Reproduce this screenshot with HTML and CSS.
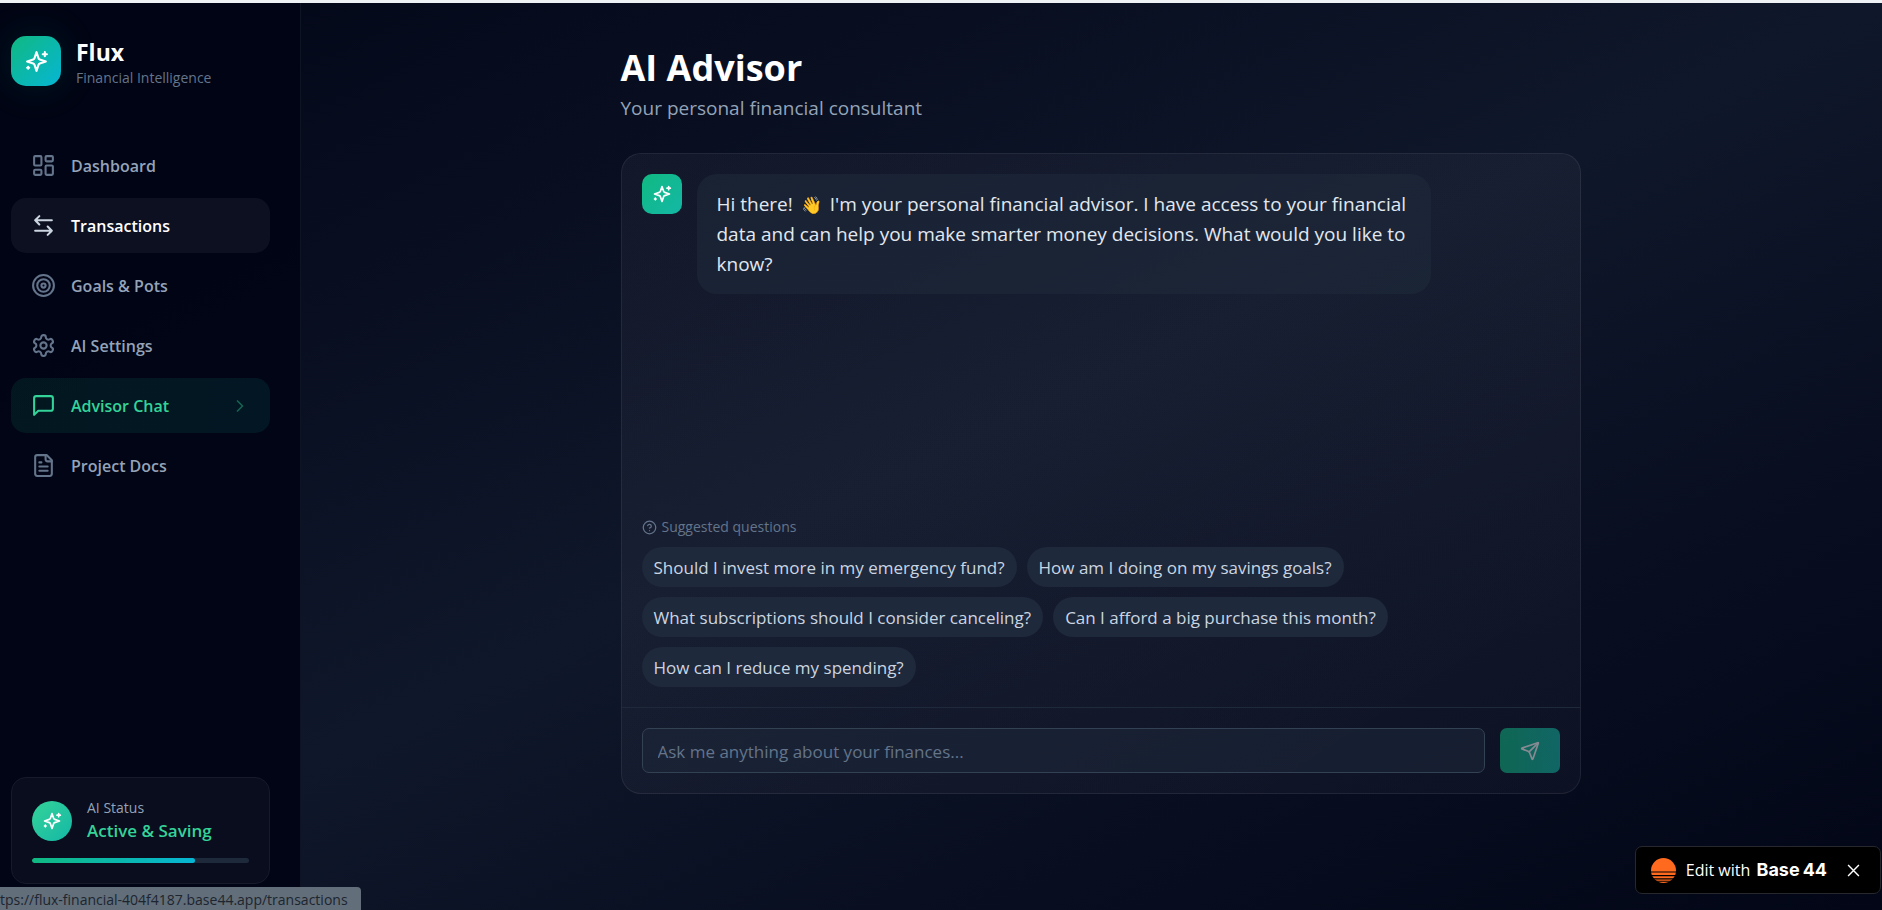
FILE: index.html
```html
<!DOCTYPE html>
<html lang="en">
<head>
<meta charset="utf-8">
<meta name="viewport" content="width=device-width, initial-scale=1">
<title>Flux – AI Advisor</title>
<link rel="stylesheet" href="styles.css">
</head>
<body>
<svg class="sprite" aria-hidden="true">
  <symbol id="sparkles" viewBox="0 0 24 24"><path d="m12 3-1.912 5.813a2 2 0 0 1-1.275 1.275L3 12l5.813 1.912a2 2 0 0 1 1.275 1.275L12 21l1.912-5.813a2 2 0 0 1 1.275-1.275L21 12l-5.813-1.912a2 2 0 0 1-1.275-1.275L12 3Z"/><path d="M20 3v4M22 5h-4M4 17v2M5 18H3"/></symbol>
</svg>
<div class="app">
  <aside class="sidebar">
    <div class="brand">
      <div class="brand-mark"><svg class="icon"><use href="#sparkles"/></svg></div>
      <div class="brand-text">
        <div class="brand-name">Flux</div>
        <div class="brand-tag">Financial Intelligence</div>
      </div>
    </div>
    <nav class="nav">
      <a class="nav-item" href="#dashboard"><svg class="icon" viewBox="0 0 24 24"><rect x="3" y="3" width="7" height="9" rx="1"/><rect x="14" y="3" width="7" height="5" rx="1"/><rect x="14" y="12" width="7" height="9" rx="1"/><rect x="3" y="16" width="7" height="5" rx="1"/></svg><span>Dashboard</span></a>
      <a class="nav-item nav-hover" href="#transactions"><svg class="icon" viewBox="0 0 24 24"><path d="M8 3 4 7l4 4M4 7h16M16 21l4-4-4-4M20 17H4"/></svg><span>Transactions</span></a>
      <a class="nav-item" href="#goals"><svg class="icon" viewBox="0 0 24 24"><circle cx="12" cy="12" r="10"/><circle cx="12" cy="12" r="6"/><circle cx="12" cy="12" r="2"/></svg><span>Goals &amp; Pots</span></a>
      <a class="nav-item" href="#settings"><svg class="icon" viewBox="0 0 24 24"><path d="M12.22 2h-.44a2 2 0 0 0-2 2v.18a2 2 0 0 1-1 1.73l-.43.25a2 2 0 0 1-2 0l-.15-.08a2 2 0 0 0-2.73.73l-.22.38a2 2 0 0 0 .73 2.73l.15.1a2 2 0 0 1 1 1.72v.51a2 2 0 0 1-1 1.74l-.15.09a2 2 0 0 0-.73 2.73l.22.38a2 2 0 0 0 2.73.73l.15-.08a2 2 0 0 1 2 0l.43.25a2 2 0 0 1 1 1.73V20a2 2 0 0 0 2 2h.44a2 2 0 0 0 2-2v-.18a2 2 0 0 1 1-1.73l.43-.25a2 2 0 0 1 2 0l.15.08a2 2 0 0 0 2.73-.73l.22-.39a2 2 0 0 0-.73-2.73l-.15-.08a2 2 0 0 1-1-1.74v-.5a2 2 0 0 1 1-1.74l.15-.09a2 2 0 0 0 .73-2.73l-.22-.38a2 2 0 0 0-2.73-.73l-.15.08a2 2 0 0 1-2 0l-.43-.25a2 2 0 0 1-1-1.73V4a2 2 0 0 0-2-2z"/><circle cx="12" cy="12" r="3"/></svg><span>AI Settings</span></a>
      <a class="nav-item nav-active" href="#advisor" aria-current="page"><svg class="icon" viewBox="0 0 24 24"><path d="M21 15a2 2 0 0 1-2 2H7l-4 4V5a2 2 0 0 1 2-2h14a2 2 0 0 1 2 2z"/></svg><span>Advisor Chat</span><svg class="icon chevron" viewBox="0 0 24 24"><path d="m9 18 6-6-6-6"/></svg></a>
      <a class="nav-item" href="#docs"><svg class="icon" viewBox="0 0 24 24"><path d="M15 2H6a2 2 0 0 0-2 2v16a2 2 0 0 0 2 2h12a2 2 0 0 0 2-2V7Z"/><path d="M14 2v4a2 2 0 0 0 2 2h4M10 9H8M16 13H8M16 17H8"/></svg><span>Project Docs</span></a>
    </nav>
    <section class="status">
      <div class="status-row">
        <div class="status-mark"><svg class="icon"><use href="#sparkles"/></svg></div>
        <div>
          <div class="status-label">AI Status</div>
          <div class="status-value">Active &amp; Saving</div>
        </div>
      </div>
      <div class="meter"><div class="meter-fill"></div></div>
    </section>
  </aside>

  <main class="main">
    <div class="column">
      <header class="page-head">
        <h1 class="page-title">AI Advisor</h1>
        <p class="page-sub">Your personal financial consultant</p>
      </header>
      <section class="chat">
        <div class="messages">
          <div class="message">
            <div class="avatar"><svg class="icon"><use href="#sparkles"/></svg></div>
            <p class="bubble">Hi there! <span class="wave">👋</span> I'm your personal financial advisor. I have access to your financial data and can help you make smarter money decisions. What would you like to know?</p>
          </div>
        </div>
        <div class="suggest">
          <p class="suggest-label"><svg class="icon" viewBox="0 0 24 24"><circle cx="12" cy="12" r="10"/><path d="M9.09 9a3 3 0 0 1 5.83 1c0 2-3 3-3 3M12 17h.01"/></svg>Suggested questions</p>
          <div class="chips">
            <button class="chip" type="button">Should I invest more in my emergency fund?</button>
            <button class="chip" type="button">How am I doing on my savings goals?</button>
            <button class="chip" type="button">What subscriptions should I consider canceling?</button>
            <button class="chip" type="button">Can I afford a big purchase this month?</button>
            <button class="chip" type="button">How can I reduce my spending?</button>
          </div>
        </div>
        <form class="composer">
          <input class="composer-input" type="text" aria-label="Message" placeholder="Ask me anything about your finances...">
          <button class="send" type="button" aria-label="Send" disabled><svg class="icon" viewBox="0 0 24 24"><path d="M14.536 21.686a.5.5 0 0 0 .937-.024l6.5-19a.496.496 0 0 0-.635-.635l-19 6.5a.5.5 0 0 0-.024.937l7.93 3.18a2 2 0 0 1 1.112 1.11z"/><path d="m21.854 2.147-10.94 10.939"/></svg></button>
        </form>
      </section>
    </div>
  </main>
</div>

<div class="link-preview">tps://flux-financial-404f4187.base44.app/transactions</div>

<div class="edit-badge">
  <svg class="sun" viewBox="0 0 25 25"><circle cx="12.5" cy="12.5" r="12.5"/><path class="sun-lines" d="M0 13.4h25v1.1H0zM0 17h25v1.2H0zM0 20.2h25v1.2H0zM0 22.8h25v.9H0z"/></svg>
  <a class="edit-link" href="#edit">Edit with <b class="edit-brand">Base<span class="edit-num">44</span></b></a>
  <button class="edit-close" type="button" aria-label="Close"><svg viewBox="0 0 12 12"><path d="M1 1l10 10M11 1 1 11"/></svg></button>
</div>
</body>
</html>
```
FILE: styles.css
```css
* { box-sizing: border-box; margin: 0; padding: 0; }

body {
  min-height: 100vh;
  border-top: 3px solid #eef2f5;
  background: linear-gradient(to bottom right, #020617, #0f172a 50%, #020617);
  color: #fff;
  font-family: "Open Sans", "Noto Sans", sans-serif;
  font-size: 16px;
}

button, input { font: inherit; color: inherit; }
a { color: inherit; text-decoration: none; }

.sprite { position: absolute; width: 0; height: 0; }

.icon {
  flex: none;
  fill: none;
  stroke: currentColor;
  stroke-width: 2;
  stroke-linecap: round;
  stroke-linejoin: round;
}

.app { display: flex; min-height: calc(100vh - 3px); }

/* Sidebar */
.sidebar {
  flex: 0 0 301px;
  display: flex;
  flex-direction: column;
  padding: 33px 30px 26px 11px;
  border-right: 1px solid #0f1424;
  background: rgba(1, 4, 20, 0.93);
}

.brand { display: flex; align-items: flex-start; gap: 15px; height: 50px; }

.brand-mark {
  display: grid;
  place-items: center;
  width: 50px;
  height: 50px;
  border-radius: 15px;
  background: linear-gradient(to bottom right, #10b981, #06b6d4);
  box-shadow: 0 0 40px rgba(16, 185, 129, 0.14);
}
.brand-mark .icon { width: 25px; height: 25px; }
.brand-text { padding-top: 2px; }
.brand-name { font-size: 23px; font-weight: 700; line-height: 28px; }
.brand-tag { color: #64748b; font-size: 14px; line-height: 24px; }

.nav { display: flex; flex-direction: column; gap: 5px; margin-top: 52px; }

.nav-item {
  display: flex;
  align-items: center;
  gap: 15px;
  height: 55px;
  padding: 0 20px;
  border-radius: 15px;
  color: #94a3b8;
  font-weight: 600;
}
.nav-item .icon { width: 25px; height: 25px; color: #64748b; }
.nav-hover { background: rgba(255, 255, 255, 0.05); color: #fff; }
.nav-hover .icon { color: #cbd5e1; }
.nav-active { background: linear-gradient(to right, rgba(16, 185, 129, 0.1), rgba(12, 182, 160, 0.1)); color: #34d399; }
.nav-active .icon { color: #34d399; }
.nav-item .chevron { width: 20px; height: 20px; margin-left: auto; opacity: 0.4; }

.status {
  margin-top: auto;
  padding: 20px;
  border: 1px solid #161a29;
  border-radius: 15px;
  background: #0a0d1d;
}
.status-row { display: flex; align-items: center; gap: 15px; margin-bottom: 15px; }
.status-mark {
  display: grid;
  place-items: center;
  width: 40px;
  height: 40px;
  border-radius: 50%;
  background: linear-gradient(to bottom right, #34d399, #14b8a6);
}
.status-mark .icon { width: 20px; height: 20px; }
.status-label { color: #94a3b8; font-size: 14px; line-height: 20px; }
.status-value { color: #34d399; font-size: 17px; font-weight: 600; line-height: 25px; }
.meter { height: 5px; overflow: hidden; border-radius: 3px; background: #1e293b; }
.meter-fill { width: 75%; height: 100%; border-radius: 3px; background: linear-gradient(to right, #10b981, #06b6d4); }

/* Main column */
.main { flex: 1; min-width: 0; padding: 40px 22px 40px 40px; }
.column { max-width: 960px; margin: 0 auto; }
.page-head { margin-bottom: 30px; }
.page-title { font-size: 36px; font-weight: 700; line-height: 50px; }
.page-sub { color: #94a3b8; font-size: 19px; line-height: 30px; }

.chat {
  display: flex;
  flex-direction: column;
  min-height: 641px;
  border: 1px solid rgba(255, 255, 255, 0.07);
  border-radius: 20px;
  background: linear-gradient(to bottom right, rgba(255, 225, 255, 0.045), rgba(255, 235, 255, 0.03));
}

.messages { flex: 1; padding: 20px; }
.message { display: flex; align-items: flex-start; gap: 15px; }
.avatar {
  flex: none;
  display: grid;
  place-items: center;
  width: 40px;
  height: 40px;
  border-radius: 10px;
  background: linear-gradient(to bottom right, #10b981, #14b8a6);
}
.avatar .icon { width: 20px; height: 20px; }
.bubble {
  max-width: 80%;
  padding: 15px 20px;
  border-radius: 20px;
  background: rgba(30, 41, 59, 0.6);
  color: #e2e8f0;
  font-size: 19px;
  line-height: 30px;
}
.wave { margin: 0 3px; font-size: 17px; line-height: 1; }

.suggest { padding: 0 20px 20px; }
.suggest-label {
  display: flex;
  align-items: center;
  gap: 5px;
  margin-bottom: 10px;
  color: #64748b;
  font-size: 14px;
  line-height: 20px;
}
.suggest-label .icon { width: 15px; height: 15px; }
.chips { display: flex; flex-wrap: wrap; gap: 10px; max-width: 800px; }
.chip {
  height: 40px;
  padding: 1px 12px 0;
  border: 0;
  border-radius: 20px;
  background: #1e293b;
  color: #cbd5e1;
  font-size: 17px;
}

.composer {
  display: flex;
  gap: 15px;
  padding: 20px;
  border-top: 1px solid #1e293b;
}
.composer-input {
  flex: 1;
  min-width: 0;
  height: 45px;
  padding: 2px 15px 0;
  border: 1px solid #334155;
  border-radius: 7px;
  background: rgba(30, 41, 59, 0.5);
  color: #fff;
  font-size: 17px;
}
.composer-input::placeholder { color: #64748b; opacity: 1; }
.send {
  display: grid;
  place-items: center;
  width: 60px;
  height: 45px;
  border: 0;
  border-radius: 7px;
  background: linear-gradient(to right, #10b981, #14b8a6);
  opacity: 0.5;
}
.send .icon { width: 20px; height: 20px; }

/* Overlays */
.link-preview {
  position: fixed;
  left: 0;
  bottom: 0;
  padding: 3px 13px 0 0;
  border-top-right-radius: 4px;
  background: #626e79;
  color: #1c2530;
  font-size: 14px;
  line-height: 20px;
}

.edit-badge {
  position: fixed;
  right: 1px;
  bottom: 16px;
  display: flex;
  align-items: center;
  height: 48px;
  padding: 0 20px 0 15px;
  border: 1px solid #26282e;
  border-radius: 7px;
  background: #000;
}
.sun { width: 25px; height: 25px; margin-right: 10px; fill: #ff6a1f; }
.sun-lines { fill: #000; }
.edit-link { font-size: 16px; white-space: nowrap; }
.edit-brand { margin-left: 2px; font-family: Inter, sans-serif; font-size: 18px; font-weight: 700; }
.edit-num { margin-left: 3px; }
.edit-close { display: grid; place-items: center; margin-left: 20px; border: 0; background: none; }
.edit-close svg { width: 13px; height: 13px; stroke: #fff; stroke-width: 1.3; fill: none; }
```
